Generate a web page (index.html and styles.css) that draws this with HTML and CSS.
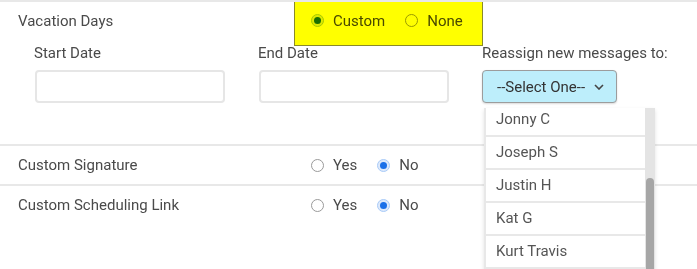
FILE: index.html
```html
<!DOCTYPE html>
<html lang="en">
<head>
    <meta charset="UTF-8">
    <meta name="viewport" content="width=device-width, initial-scale=1.0">
    <title>Mailbox Settings</title>
    <link rel="stylesheet" href="styles.css">
</head>
<body>
    <div class="settings">
        <div class="section vacation">
            <div class="row heading">
                <div class="row-label">Vacation Days</div>
                <div class="options highlight">
                    <span class="option"><span class="radio checked"></span>Custom</span>
                    <span class="option"><span class="radio"></span>None</span>
                </div>
            </div>
            <div class="fields">
                <div class="field">
                    <label>Start Date</label>
                    <input type="text" class="text-input">
                </div>
                <div class="field">
                    <label>End Date</label>
                    <input type="text" class="text-input">
                </div>
                <div class="field reassign">
                    <label>Reassign new messages to:</label>
                    <div class="select">
                        <span>--Select One--</span>
                        <svg class="chevron" width="10" height="6" viewBox="0 0 10 6">
                            <path d="M1 1 L5 5 L9 1" fill="none" stroke="#444" stroke-width="1.6"/>
                        </svg>
                    </div>
                    <div class="dropdown">
                        <ul class="dropdown-list">
                            <li>Jonny C</li>
                            <li>Joseph S</li>
                            <li>Justin H</li>
                            <li>Kat G</li>
                            <li>Kurt Travis</li>
                        </ul>
                        <div class="scrollbar"><div class="thumb"></div></div>
                    </div>
                </div>
            </div>
        </div>

        <div class="section row">
            <div class="row-label">Custom Signature</div>
            <div class="options">
                <span class="option"><span class="radio"></span>Yes</span>
                <span class="option"><span class="radio checked"></span>No</span>
            </div>
        </div>

        <div class="section row last">
            <div class="row-label">Custom Scheduling Link</div>
            <div class="options">
                <span class="option"><span class="radio"></span>Yes</span>
                <span class="option"><span class="radio checked"></span>No</span>
            </div>
        </div>
    </div>
</body>
</html>
```

FILE: styles.css
```css
body {
    margin: 0;
    font-family: Roboto, "Liberation Sans", Arial, sans-serif;
    font-size: 15px;
    color: #4a4a4a;
    background: #fff;
}
.settings {
    width: 697px;
    height: 269px;
    overflow: hidden;
    border-top: 2px solid #e8e8e8;
    box-sizing: border-box;
}
.section {
    border-bottom: 2px solid #e8e8e8;
}
.section.last {
    border-bottom: none;
}
.row {
    display: flex;
    align-items: center;
    height: 38px;
    padding-left: 18px;
}
.heading {
    height: 37px;
    padding-left: 18px;
}
.row-label {
    width: 293px;
    flex-shrink: 0;
}
.options {
    display: flex;
    align-items: center;
}
.option {
    display: flex;
    align-items: center;
    margin-right: 20px;
}
.radio {
    width: 11px;
    height: 11px;
    border: 1px solid #9a9a9a;
    border-radius: 50%;
    margin-right: 9px;
    box-sizing: content-box;
    position: relative;
    background: #fff;
}
.radio.checked {
    border-color: #a9cbf8;
    background: #dde9fb;
}
.radio.checked::after {
    content: "";
    position: absolute;
    left: 2px;
    top: 2px;
    width: 7px;
    height: 7px;
    border-radius: 50%;
    background: #1a6fe8;
}
.highlight {
    position: relative;
}
.highlight::after {
    content: "";
    position: absolute;
    left: -17px;
    right: 0;
    top: -16px;
    bottom: -16px;
    background: #ffff00;
    border: 1px solid #8a8a2a;
    mix-blend-mode: multiply;
}
.fields {
    display: flex;
    gap: 33px;
    padding: 6px 0 41px 34px;
}
.field {
    width: 191px;
    display: flex;
    flex-direction: column;
}
.field label {
    line-height: 17px;
    margin-bottom: 8px;
}
.text-input {
    height: 33px;
    border: 2px solid #e6e6e6;
    border-radius: 4px;
    box-sizing: border-box;
    margin: 0 0 0 1px;
    padding: 0 8px;
}
.reassign {
    position: relative;
    width: 200px;
}
.reassign label {
    white-space: nowrap;
}
.select {
    width: 135px;
    height: 33px;
    box-sizing: border-box;
    border: 1px solid #9c9c9c;
    border-radius: 4px;
    background: #bdeefb;
    display: flex;
    align-items: center;
    padding-left: 14px;
    color: #333;
    box-shadow: 0 1px 2px rgba(0,0,0,0.15);
}
.chevron {
    margin-left: 9px;
}
.dropdown {
    position: absolute;
    left: 2px;
    top: 63px;
    width: 169px;
    height: 170px;
    overflow: hidden;
    display: flex;
    background: #fff;
    border-left: 2px solid #e8e8e8;
    box-shadow: 0 2px 4px rgba(0,0,0,0.12);
}
.dropdown-list {
    list-style: none;
    margin: -4px 0 0 0;
    padding: 0;
    flex: 1;
}
.dropdown-list li {
    height: 31px;
    line-height: 31px;
    padding-left: 10px;
    border-bottom: 2px solid #e8e8e8;
    color: #555;
}
.scrollbar {
    width: 10px;
    background: #e4e4e4;
    position: relative;
}
.thumb {
    position: absolute;
    left: 1px;
    right: 1px;
    top: 70px;
    bottom: 0;
    background: #a6a6a6;
    border-radius: 4px 4px 0 0;
}
```
